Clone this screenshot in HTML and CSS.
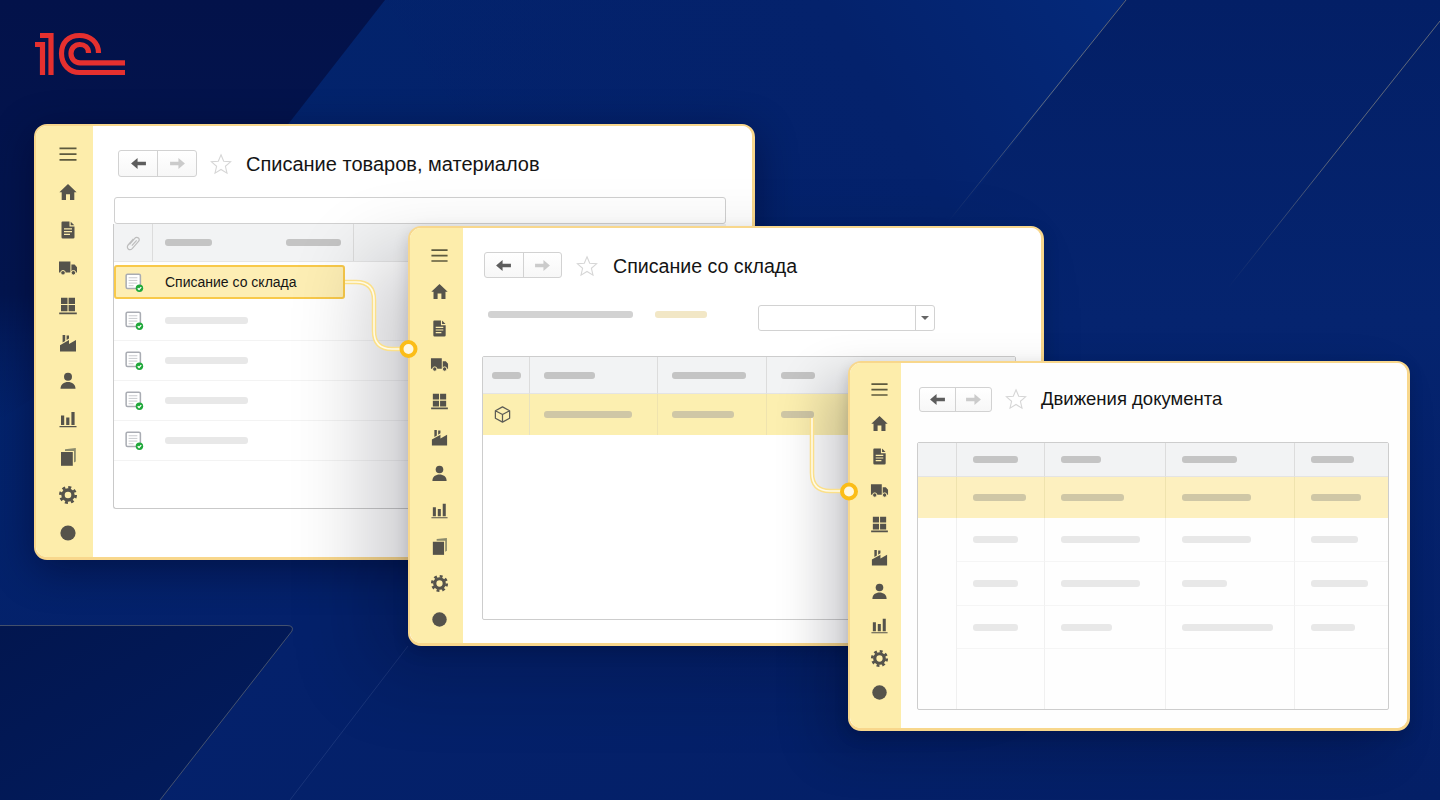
FILE: index.html
```html
<!DOCTYPE html>
<html lang="ru">
<head>
<meta charset="utf-8">
<title>1С — Списание товаров, материалов</title>
<link rel="stylesheet" href="styles.css">
</head>
<body>
<svg class="defs" width="0" height="0" aria-hidden="true">
  <defs>
    <symbol id="i-menu" viewBox="0 0 20 20"><path fill="#5d5a3e" d="M1.5 3.5H18.5V5.3H1.5ZM1.5 9.2H18.5V11H1.5ZM1.5 14.9H18.5V16.7H1.5Z"/></symbol>
    <symbol id="i-home" viewBox="0 0 20 20"><path d="M10 2 18.6 10.2H16.3V18H12V12.2H8V18H3.7V10.2H1.4Z"/></symbol>
    <symbol id="i-doc" viewBox="0 0 20 20"><path fill-rule="evenodd" d="M4.5 1.5H11.5V6.5H16.5V17.2Q16.5 18.5 15.2 18.5H4.8Q3.5 18.5 3.5 17.2V2.5Q3.5 1.5 4.5 1.5ZM12.7 1.7 16.3 5.3H12.7ZM6 8.2V9.4H14V8.2ZM6 11V12.2H14V11ZM6 13.8V15H12V13.8Z"/></symbol>
    <symbol id="i-truck" viewBox="0 0 20 20"><path d="M1 3.5H12.4V14.5H1ZM13.4 6.5H16.6L19 9.2V14.5H13.4Z"/><circle class="wheel" cx="5" cy="14.8" r="2.3"/><circle class="wheel" cx="15.4" cy="14.8" r="2.3"/></symbol>
    <symbol id="i-grid" viewBox="0 0 20 20"><path d="M3 1.8H9.5V8H3ZM10.6 1.8H17V8H10.6ZM3 9.1H9.5V15.3H3ZM10.6 9.1H17V15.3H10.6ZM1.2 16.4H18.8V18.2H1.2Z"/></symbol>
    <symbol id="i-factory" viewBox="0 0 20 20"><path d="M2 18.5V12.2L11 7V11L18 7V18.5ZM4.6 2H7.2V8L4.6 9.5ZM8.6 2.5H11V5.6L8.6 7Z"/></symbol>
    <symbol id="i-user" viewBox="0 0 20 20"><circle cx="10" cy="5.8" r="4"/><path d="M2.5 17.8C2.5 13.2 6 11 10 11S17.5 13.2 17.5 17.8Z"/></symbol>
    <symbol id="i-chart" viewBox="0 0 20 20"><path d="M3 6.5H6.2V16H3ZM8.2 8.5H11.4V16H8.2ZM13.4 3H16.6V16H13.4ZM1.5 17H18.5V18.2H1.5Z"/></symbol>
    <symbol id="i-copies" viewBox="0 0 20 20"><path class="back" d="M7 2.2 17.8 1V14.5L16 15.5V4H7Z"/><path d="M3 5H14.8V18.8H3Z"/></symbol>
    <symbol id="i-gear" viewBox="0 0 20 20"><circle class="ring" cx="10" cy="10" r="5" stroke-width="3.4"/><circle class="ring" cx="10" cy="10" r="7.6" stroke-width="2.8" stroke-dasharray="3 2.97"/></symbol>
    <symbol id="i-dot" viewBox="0 0 20 20"><circle cx="10" cy="10" r="7.6"/></symbol>
    <symbol id="i-back" viewBox="0 0 18 14"><path d="M1 7 8 1.2V5.2H17V8.8H8V12.8Z"/></symbol>
    <symbol id="i-fwd" viewBox="0 0 18 14"><path d="M17 7 10 1.2V5.2H1V8.8H10V12.8Z"/></symbol>
    <symbol id="i-star" viewBox="0 0 22 22"><path d="M11 1.8 13.7 8.2 20.6 8.8 15.4 13.3 17 20.1 11 16.5 5 20.1 6.6 13.3 1.4 8.8 8.3 8.2Z"/></symbol>
    <symbol id="i-rowdoc" viewBox="0 0 20 20">
      <rect class="rd-box" x="1.2" y="1.2" width="15" height="15" rx="1.5"/>
      <path class="rd-line" d="M3.8 5H13M3.8 7.8H13M3.8 10.6H13M3.8 13.4H9"/>
      <circle class="rd-ok" cx="15.2" cy="16" r="3.9"/>
      <path class="rd-check" d="M13.4 16 14.8 17.4 17.1 14.8"/>
    </symbol>
    <symbol id="i-clip" viewBox="0 0 20 20"><path d="M6 11.5 12.2 4.2C13.6 2.6 15.6 2.7 16.8 3.8 18 5 18 6.8 16.6 8.4L9 17C7.6 18.5 5.4 18.6 4 17.4 2.6 16.2 2.6 14 3.9 12.5L10.5 5M8.6 13.4 14.6 6.6"/></symbol>
    <symbol id="i-cube" viewBox="0 0 20 20"><path d="M10 2 17.5 6V14L10 18 2.5 14V6ZM2.5 6 10 10 17.5 6M10 10V18"/></symbol>
  </defs>
</svg>

<main class="stage">
  <svg class="backdrop" viewBox="0 0 1440 800" aria-hidden="true">
    <defs>
      <linearGradient id="g-base" x1="0" y1="0" x2="1" y2="1"><stop offset="0" stop-color="#02246c"/><stop offset=".5" stop-color="#04216b"/><stop offset="1" stop-color="#041f66"/></linearGradient>
      <linearGradient id="g-dark" x1="0" y1="0" x2="0" y2="1"><stop offset="0" stop-color="#03124a"/><stop offset=".7" stop-color="#03154f"/><stop offset="1" stop-color="#03195a" stop-opacity="0"/></linearGradient>
      <linearGradient id="g-band" x1="1" y1="0" x2="0" y2=".4"><stop offset="0" stop-color="#04297a"/><stop offset=".35" stop-color="#04226c"/><stop offset="1" stop-color="#04216b" stop-opacity="0"/></linearGradient>
      <linearGradient id="g-right" x1="0" y1="0" x2="0" y2="1"><stop offset="0" stop-color="#031f66"/><stop offset=".4" stop-color="#05246f"/><stop offset="1" stop-color="#04206a" stop-opacity="0"/></linearGradient>
      <linearGradient id="g-pit" x1="0" y1="0" x2="1" y2="1"><stop offset="0" stop-color="#02164f"/><stop offset="1" stop-color="#021c5e"/></linearGradient>
      <linearGradient id="g-l1" x1="1" y1="0" x2="0" y2="1"><stop offset="0" stop-color="#b9ae8a" stop-opacity=".5"/><stop offset=".5" stop-color="#b9ae8a" stop-opacity=".5"/><stop offset="1" stop-color="#b9ae8a" stop-opacity="0"/></linearGradient>
      <linearGradient id="g-l2" x1="0" y1="0" x2="1" y2="0"><stop offset="0" stop-color="#c9b98a" stop-opacity="0"/><stop offset=".6" stop-color="#c9b98a" stop-opacity=".5"/><stop offset="1" stop-color="#c9b98a" stop-opacity=".55"/></linearGradient>
    </defs>
    <rect width="1440" height="800" fill="url(#g-base)"/>
    <polygon points="0,0 385,0 120,340 0,420" fill="url(#g-dark)"/>
    <polygon points="385,0 1125,0 950,225 700,500" fill="url(#g-band)"/>
    <polygon points="1125,0 1440,0 1440,800 700,800 700,500 950,225" fill="url(#g-right)"/>
    <path d="M0 625.5H287Q294 625.5 292 631L160 800H0Z" fill="url(#g-pit)"/>
    <path d="M0 625.5H287Q294 625.5 292 631L160 800" fill="none" stroke="#a79f83" stroke-opacity=".4"/>
    <path d="M1126 0 948 222" stroke="url(#g-l1)" stroke-width="1"/>
    <path d="M1440 21 1228 288" stroke="url(#g-l1)" stroke-width="1"/>
    <path d="M1230 342.5H1440" stroke="url(#g-l2)" stroke-width="1.2"/>
    <path d="M530 660.5H850" stroke="url(#g-l2)" stroke-width="1"/>
    <path d="M408 646 290 800" stroke="#3a5290" stroke-opacity=".4"/>
  </svg>

  <svg class="logo" viewBox="0 0 92 44" aria-label="1С" role="img">
    <g class="logo-strokes">
      <path d="M1 12.5H8.5V43"/>
      <path d="M6 3.500H17V43"/>
      <path d="M64.500 21C64.500 10 56 3.500 45.500 3.500 34 3.500 27.500 11 27.500 21.500 27.500 33 36 40.500 45.500 40.500H91"/>
      <path d="M54.500 21C54.500 15.500 50.500 12.500 45.800 12.500 40.500 12.500 37 16.500 37 21.500 37 27 41 30.800 46 30.800H91"/>
    </g>
  </svg>

  <section class="win win-a">
    <nav class="side side-a">
      <svg class="ico"><use href="#i-menu"/></svg><svg class="ico"><use href="#i-home"/></svg><svg class="ico"><use href="#i-doc"/></svg><svg class="ico"><use href="#i-truck"/></svg><svg class="ico"><use href="#i-grid"/></svg><svg class="ico"><use href="#i-factory"/></svg><svg class="ico"><use href="#i-user"/></svg><svg class="ico"><use href="#i-chart"/></svg><svg class="ico"><use href="#i-copies"/></svg><svg class="ico"><use href="#i-gear"/></svg><svg class="ico"><use href="#i-dot"/></svg>
    </nav>
    <div class="body body-a">
      <header class="head head-a">
        <div class="navgroup nav-a">
          <span class="navbtn"><svg class="arrow dark"><use href="#i-back"/></svg></span>
          <span class="navbtn"><svg class="arrow pale"><use href="#i-fwd"/></svg></span>
        </div>
        <svg class="star"><use href="#i-star"/></svg>
        <h1 class="title">Списание товаров, материалов</h1>
      </header>
      <div class="search"></div>
      <div class="list">
        <div class="list-head">
          <div class="lh-cell lh-clip"><svg class="clip"><use href="#i-clip"/></svg></div>
          <div class="lh-cell lh-main"><span class="bar dark-bar" style="width:47px"></span><span class="bar dark-bar" style="width:55px"></span></div>
          <div class="lh-cell lh-rest"></div>
        </div>
        <div class="list-row list-row-sel">
          <svg class="rowdoc"><use href="#i-rowdoc"/></svg>
          <span class="row-text">Списание со склада</span>
        </div>
        <div class="list-row"><svg class="rowdoc"><use href="#i-rowdoc"/></svg><span class="bar light-bar" style="width:83px"></span></div>
        <div class="list-row"><svg class="rowdoc"><use href="#i-rowdoc"/></svg><span class="bar light-bar" style="width:83px"></span></div>
        <div class="list-row"><svg class="rowdoc"><use href="#i-rowdoc"/></svg><span class="bar light-bar" style="width:83px"></span></div>
        <div class="list-row"><svg class="rowdoc"><use href="#i-rowdoc"/></svg><span class="bar light-bar" style="width:83px"></span></div>
      </div>
    </div>
  </section>

  <section class="win win-b">
    <nav class="side side-b">
      <svg class="ico"><use href="#i-menu"/></svg><svg class="ico"><use href="#i-home"/></svg><svg class="ico"><use href="#i-doc"/></svg><svg class="ico"><use href="#i-truck"/></svg><svg class="ico"><use href="#i-grid"/></svg><svg class="ico"><use href="#i-factory"/></svg><svg class="ico"><use href="#i-user"/></svg><svg class="ico"><use href="#i-chart"/></svg><svg class="ico"><use href="#i-copies"/></svg><svg class="ico"><use href="#i-gear"/></svg><svg class="ico"><use href="#i-dot"/></svg>
    </nav>
    <div class="body body-b">
      <header class="head head-b">
        <div class="navgroup nav-b">
          <span class="navbtn"><svg class="arrow dark"><use href="#i-back"/></svg></span>
          <span class="navbtn"><svg class="arrow pale"><use href="#i-fwd"/></svg></span>
        </div>
        <svg class="star"><use href="#i-star"/></svg>
        <h1 class="title">Списание со склада</h1>
      </header>
      <div class="filter">
        <span class="bar filter-bar" style="width:145px"></span>
        <span class="bar filter-tag" style="width:52px"></span>
        <div class="select"><span class="select-btn"><span class="caret"></span></span></div>
      </div>
      <div class="table table-b">
        <div class="cell hd"><span class="bar dark-bar" style="width:29px"></span></div>
        <div class="cell hd"><span class="bar dark-bar" style="width:51px"></span></div>
        <div class="cell hd"><span class="bar dark-bar" style="width:74px"></span></div>
        <div class="cell hd"><span class="bar dark-bar" style="width:34px"></span></div>
        <div class="cell sel sel-b cube-cell"><svg class="cube"><use href="#i-cube"/></svg></div>
        <div class="cell sel sel-b"><span class="bar sel-bar" style="width:88px"></span></div>
        <div class="cell sel sel-b"><span class="bar sel-bar" style="width:62px"></span></div>
        <div class="cell sel sel-b"><span class="bar sel-bar" style="width:33px"></span></div>
      </div>
    </div>
  </section>

  <section class="win win-c">
    <nav class="side side-c">
      <svg class="ico"><use href="#i-menu"/></svg><svg class="ico"><use href="#i-home"/></svg><svg class="ico"><use href="#i-doc"/></svg><svg class="ico"><use href="#i-truck"/></svg><svg class="ico"><use href="#i-grid"/></svg><svg class="ico"><use href="#i-factory"/></svg><svg class="ico"><use href="#i-user"/></svg><svg class="ico"><use href="#i-chart"/></svg><svg class="ico"><use href="#i-gear"/></svg><svg class="ico"><use href="#i-dot"/></svg>
    </nav>
    <div class="body body-c">
      <header class="head head-c">
        <div class="navgroup nav-c">
          <span class="navbtn"><svg class="arrow dark"><use href="#i-back"/></svg></span>
          <span class="navbtn"><svg class="arrow pale"><use href="#i-fwd"/></svg></span>
        </div>
        <svg class="star"><use href="#i-star"/></svg>
        <h1 class="title">Движения документа</h1>
      </header>
      <div class="table table-c">
        <div class="cell hd"></div>
        <div class="cell hd"><span class="bar dark-bar" style="width:45px"></span></div>
        <div class="cell hd"><span class="bar dark-bar" style="width:40px"></span></div>
        <div class="cell hd"><span class="bar dark-bar" style="width:55px"></span></div>
        <div class="cell hd"><span class="bar dark-bar" style="width:43px"></span></div>

        <div class="cell sel sel-c"></div>
        <div class="cell sel sel-c"><span class="bar sel-bar" style="width:53px"></span></div>
        <div class="cell sel sel-c"><span class="bar sel-bar" style="width:63px"></span></div>
        <div class="cell sel sel-c"><span class="bar sel-bar" style="width:69px"></span></div>
        <div class="cell sel sel-c"><span class="bar sel-bar" style="width:50px"></span></div>

        <div class="cell lead"></div>
        <div class="cell"><span class="bar light-bar" style="width:45px"></span></div>
        <div class="cell"><span class="bar light-bar" style="width:79px"></span></div>
        <div class="cell"><span class="bar light-bar" style="width:69px"></span></div>
        <div class="cell"><span class="bar light-bar" style="width:47px"></span></div>

        <div class="cell lead"></div>
        <div class="cell"><span class="bar light-bar" style="width:45px"></span></div>
        <div class="cell"><span class="bar light-bar" style="width:79px"></span></div>
        <div class="cell"><span class="bar light-bar" style="width:45px"></span></div>
        <div class="cell"><span class="bar light-bar" style="width:57px"></span></div>

        <div class="cell lead"></div>
        <div class="cell"><span class="bar light-bar" style="width:45px"></span></div>
        <div class="cell"><span class="bar light-bar" style="width:51px"></span></div>
        <div class="cell"><span class="bar light-bar" style="width:91px"></span></div>
        <div class="cell"><span class="bar light-bar" style="width:44px"></span></div>

        <div class="cell lead"></div>
        <div class="cell end"></div>
        <div class="cell end"></div>
        <div class="cell end"></div>
        <div class="cell end"></div>
      </div>
    </div>
  </section>

  <svg class="links" viewBox="0 0 1440 800" aria-hidden="true">
    <g class="link">
      <path class="glow" d="M345 282H356Q374 282 374 300V331Q374 349 392 349H408"/>
      <path class="core" d="M345 282H356Q374 282 374 300V331Q374 349 392 349H408"/>
      <path class="glow" d="M812 418V473Q812 491 830 491H849"/>
      <path class="core" d="M812 418V473Q812 491 830 491H849"/>
    </g>
    <circle class="pin" cx="408.500" cy="349" r="7"/>
    <circle class="pin" cx="849" cy="491.500" r="7"/>
  </svg>
</main>
</body>
</html>
```

FILE: styles.css
```css
* { box-sizing: border-box; }

html, body {
  margin: 0;
  height: 100%;
  background: #04216b;
}

.defs { position: absolute; }

.stage {
  position: relative;
  width: 1440px;
  height: 800px;
  overflow: hidden;
  font-family: "Liberation Sans", Arial, sans-serif;
  color: #111;
}

.backdrop, .links {
  position: absolute;
  inset: 0;
  width: 1440px;
  height: 800px;
}

.links { z-index: 5; pointer-events: none; }

.logo {
  position: absolute;
  left: 34px;
  top: 32px;
  width: 92px;
  height: 44px;
}

.logo-strokes {
  fill: none;
  stroke: #e5302f;
  stroke-width: 5.2;
}

/* windows on the desktop */
.win {
  position: absolute;
  display: flex;
  border-style: solid;
  border-color: #f8d78c;
  border-width: 2px 3px 3px 2px;
  border-radius: 13px;
  background: #fff;
}

.win-a {
  left: 34px; top: 124px; width: 721px; height: 436px;
  z-index: 1;
  box-shadow: 0 10px 40px rgba(0, 4, 30, .45);
}

.win-b {
  left: 408px; top: 226px; width: 636px; height: 420px;
  z-index: 2;
  box-shadow: 0 6px 16px rgba(0, 5, 30, .16), -40px 30px 80px rgba(0, 2, 20, .2);
}

.win-c {
  left: 848px; top: 361px; width: 562px; height: 370px;
  z-index: 3;
  box-shadow: 0 6px 14px rgba(0, 5, 30, .16), -24px 20px 50px rgba(0, 2, 20, .2);
}

/* sidebar */
.side {
  flex: none;
  display: flex;
  flex-direction: column;
  align-items: center;
  justify-content: space-between;
  background: #fdedab;
  border-radius: 11px 0 0 11px;
}

.side-a { width: 57px; padding: 18px 0 14px 7px; }
.side-b { width: 53px; padding: 18px 0 14px 5px; }
.side-c { width: 51px; padding: 17px 0 26px 7px; }

.ico {
  display: block;
  width: 20px;
  height: 20px;
  fill: #55534b;
}

.side-b .ico, .side-c .ico { width: 19px; height: 19px; }

.wheel { stroke: #fdedab; stroke-width: 1; fill: #55534b; }
.back { fill: #8a8a6c; }
.ring { fill: none; stroke: #55534b; }

/* window body */
.body {
  flex: 1;
  min-width: 0;
  display: flex;
  flex-direction: column;
  background: #fff;
  border-radius: 0 10px 10px 0;
}

.body-a { padding: 24px 26px 0 20px; }
.body-b { padding: 24px 25px 0 19px; }
.body-c { padding: 23px 18px 0 16px; background: #fefefe; }

.head { display: flex; align-items: center; flex: none; }
.head-a { margin-left: 5px; }
.head-b { margin-left: 2px; height: 26px; }
.head-c { margin-left: 2px; }

.navgroup {
  display: flex;
  border: 1px solid #d2d2d2;
  border-radius: 3px;
  background: linear-gradient(#fff, #f7f7f7);
}

.nav-a { width: 79px; height: 27px; }
.nav-b { width: 78px; height: 26px; }
.nav-c { width: 73px; height: 25px; }

.navbtn {
  flex: 1;
  display: flex;
  align-items: center;
  justify-content: center;
}

.navbtn + .navbtn { border-left: 1px solid #d2d2d2; }

.arrow { width: 17px; height: 13px; }
.arrow.dark { fill: #5d5d5d; }
.arrow.pale { fill: #cbcbcb; }

.star {
  width: 22px;
  height: 22px;
  margin: 0 14px 0 13px;
  fill: #fff;
  stroke: #d6d6d6;
  stroke-width: 1.1;
}

.head-b .star { margin: 2px 15px 0 14px; }
.head-c .star { margin-left: 13px; }

.title {
  margin: 0;
  font-size: 20px;
  font-weight: 400;
  line-height: 26px;
  white-space: nowrap;
  color: #141414;
}

.head-b .title { font-size: 19.6px; margin-top: 2px; }
.head-c .title { font-size: 18.5px; }

.search {
  flex: none;
  height: 27px;
  margin: 20px 0 0 1px;
  border: 1px solid #d0d0d0;
  border-radius: 3px;
}

/* list in the first window */
.list {
  height: 285px;
  border-left: 1px solid #c9c9c9;
  border-bottom: 1px solid #c9c9c9;
  border-radius: 0 0 0 3px;
}

.list-head {
  display: flex;
  height: 38px;
  background: #f2f3f4;
  border-bottom: 1px solid #e6e6e6;
}

.lh-cell {
  display: flex;
  align-items: center;
  border-right: 1px solid #dcdcdc;
}

.lh-clip { width: 39px; justify-content: center; }
.lh-main { width: 201px; justify-content: space-between; padding: 0 12px; }
.lh-rest { flex: 1; border-right: 0; }

.clip {
  width: 16px;
  height: 16px;
  fill: none;
  stroke: #bdbdbd;
  stroke-width: 1.5;
}

.list-row {
  display: flex;
  align-items: center;
  height: 40px;
  padding-left: 11px;
  gap: 21px;
  border-bottom: 1px solid #f3f3f3;
}

.list-row-sel {
  width: 231px;
  height: 34px;
  margin: 3px 0 2px;
  padding-left: 9px;
  gap: 21px;
  background: #fdeeb4;
  border: 2px solid #f8c94a;
  border-radius: 3px;
}

.rowdoc { flex: none; width: 19px; height: 19px; }
.rd-box { fill: #fff; stroke: #a9acb3; stroke-width: 1.6; }
.list-row-sel .rd-box { fill: #fdf4cf; }
.rd-line { fill: none; stroke: #c5c7cb; stroke-width: 1; }
.rd-ok { fill: #1fa83a; }
.rd-check { fill: none; stroke: #fff; stroke-width: 1.3; }

.row-text {
  font-size: 14px;
  line-height: 18px;
  white-space: nowrap;
  color: #151515;
}

/* placeholder bars */
.bar {
  display: block;
  flex: none;
  height: 7px;
  border-radius: 3px;
}

.dark-bar { background: #c4c4c4; }
.light-bar { background: #e8e8e8; }
.sel-bar { background: #cfc7a6; }
.filter-bar { background: #d2d2d2; margin-top: 6px; }
.filter-tag { background: #f2e7c6; margin: 6px 0 0 22px; }

/* filter row */
.filter {
  flex: none;
  display: flex;
  align-items: flex-start;
  height: 26px;
  margin: 27px 0 25px 6px;
}

.select {
  display: flex;
  justify-content: flex-end;
  width: 177px;
  height: 26px;
  margin-left: 51px;
  border: 1px solid #d2d2d2;
  border-radius: 3px;
}

.select-btn {
  display: flex;
  align-items: center;
  justify-content: center;
  width: 19px;
  border-left: 1px solid #d2d2d2;
}

.caret {
  width: 0;
  height: 0;
  border-left: 4px solid transparent;
  border-right: 4px solid transparent;
  border-top: 4px solid #666;
}

/* grid tables */
.table {
  display: grid;
  border: 1px solid #cdcdcd;
  border-radius: 2px;
}

.table-b {
  height: 264px;
  grid-template-columns: 47px 128px 109px 1fr;
  grid-template-rows: 37px 41px;
}

.table-c {
  height: 268px;
  margin-top: 30px;
  grid-template-columns: 39px 88px 121px 129px 1fr;
  grid-template-rows: 34px 41px 44px 44px 43px 1fr;
}

.cell {
  display: flex;
  align-items: center;
  padding-left: 16px;
  border-right: 1px solid #f0f0f0;
  border-bottom: 1px solid #f5f5f5;
}

.cell:last-child, .cell:nth-child(5n) { border-right: 0; }
.table-b .cell { padding-left: 14px; }
.table-b .cell:first-child { padding-left: 9px; }
.table-b .cell:nth-child(5n) { border-right: 1px solid #e8e2bf; }
.table-b .cell:nth-child(4n) { border-right: 0; }

.cell.hd {
  background: #f2f3f4;
  border-right-color: #dcdcdc;
  border-bottom-color: #e4e4e4;
}

.cell.sel { border-bottom: 0; border-right-color: #efe3ae; }
.sel-b { background: #fcefb0; }
.sel-c { background: #fdf0bf; }
.cell.lead { border-bottom: 0; }
.cell.end { border-bottom: 0; }

.table-b .cube-cell { padding-left: 10px; }
.cube {
  width: 19px;
  height: 19px;
  fill: none;
  stroke: #5c5c55;
  stroke-width: 1.3;
  stroke-linejoin: round;
}

/* connectors */
.link { fill: none; }
.glow { stroke: #fbe08a; stroke-width: 4.5; }
.core { stroke: #fffbe8; stroke-width: 1.6; }
.pin { fill: #fff8e0; stroke: #fbbd18; stroke-width: 4; }
```
